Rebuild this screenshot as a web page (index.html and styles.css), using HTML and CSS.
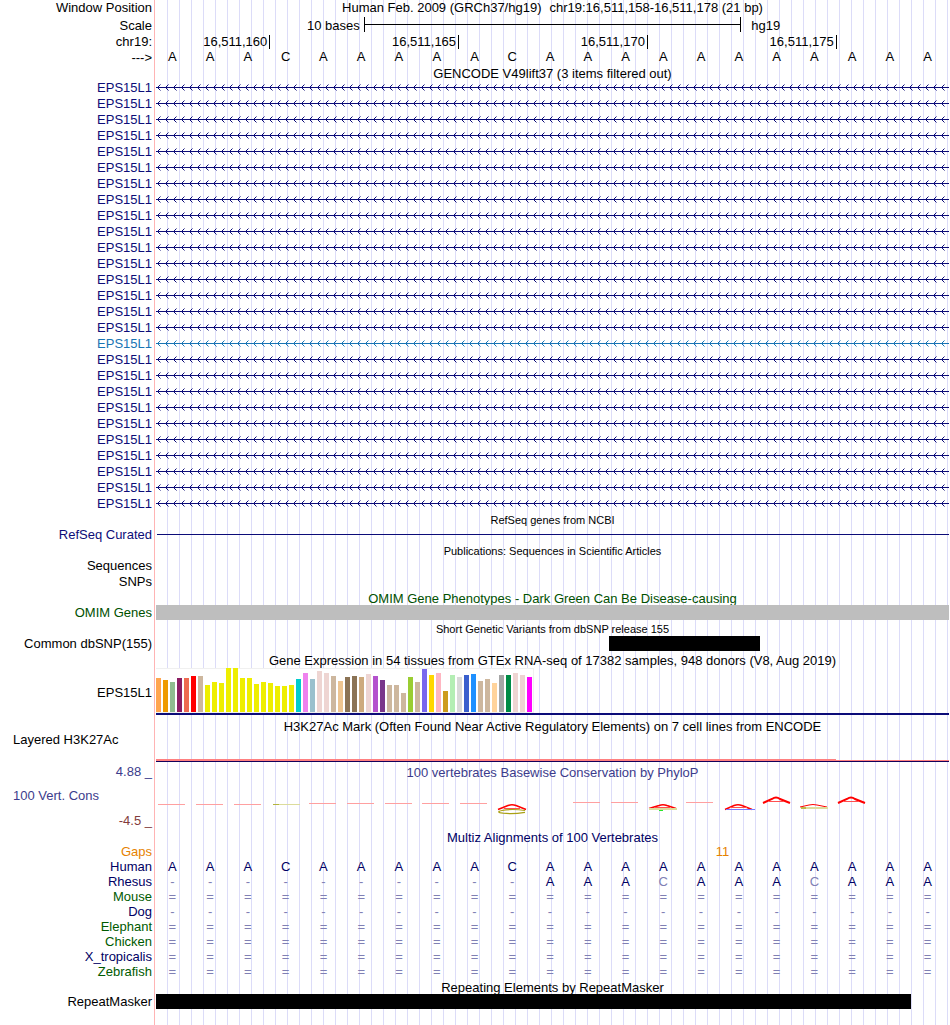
FILE: index.html
```html
<!DOCTYPE html>
<html lang="en">
  <head>
    <meta charset="UTF-8" />
    <meta name="viewport" content="width=device-width, initial-scale=1.0" />
    <title>Human chr19:16,511,158-16,511,178</title>
    <link rel="stylesheet" href="styles.css">
  </head>
  <body>
    <!-- chevron fills shared by all gene rows -->
    <svg class="defs" width="0" height="0" aria-hidden="true">
      <defs>
        <pattern id="chevrons-coding" width="8" height="16" patternUnits="userSpaceOnUse">
          <path class="coding-line" d="M0 7.5H8M4.5 4.5L1.5 7.5L4.5 10.5" />
        </pattern>
        <pattern id="chevrons-noncoding" width="8" height="16" patternUnits="userSpaceOnUse">
          <path class="noncoding-line" d="M0 7.5H8M4.5 4.5L1.5 7.5L4.5 10.5" />
        </pattern>
      </defs>
    </svg>

    <main class="browser">
      <div class="row">
        <div class="label">Window Position</div>
        <div class="data title position"><span>Human Feb. 2009 (GRCh37/hg19)</span><span>chr19:16,511,158-16,511,178 (21 bp)</span></div>
      </div>
      <div class="row scale-row">
        <div class="label">Scale</div>
        <div class="data scale">
          <span class="scale-length">10 bases</span>
          <span class="scale-bar"></span>
          <span class="scale-db">hg19</span>
        </div>
      </div>
      <div class="row">
        <div class="label">chr19:</div>
        <div class="data ruler">
          <span>16,511,160</span>
          <span>16,511,165</span>
          <span>16,511,170</span>
          <span>16,511,175</span>
        </div>
      </div>
      <div class="row short">
        <div class="label">---&gt;</div>
        <div class="data bases sequence" data-seq="AAACAAAAACAAAAAAAAAAA"></div>
      </div>

      <div class="row short"><div class="label"></div><h2 class="data title">GENCODE V49lift37 (3 items filtered out)</h2></div>
      <div id="genes"></div>

      <div class="row short"><div class="label"></div><h2 class="data title small">RefSeq genes from NCBI</h2></div>
      <div class="row coding">
        <div class="label">RefSeq Curated</div>
        <div class="data refseq"><span></span></div>
      </div>

      <div class="row short"><div class="label"></div><h2 class="data title small">Publications: Sequences in Scientific Articles</h2></div>
      <div class="row"><div class="label">Sequences</div><div class="data"></div></div>
      <div class="row"><div class="label">SNPs</div><div class="data"></div></div>

      <div class="row short omim"><div class="label"></div><h2 class="data title">OMIM Gene Phenotypes - Dark Green Can Be Disease-causing</h2></div>
      <div class="row omim">
        <div class="label">OMIM Genes</div>
        <div class="data"><div class="block omim-block"></div></div>
      </div>

      <div class="row short"><div class="label"></div><h2 class="data title small">Short Genetic Variants from dbSNP release 155</h2></div>
      <div class="row">
        <div class="label">Common dbSNP(155)</div>
        <div class="data dbsnp"><div class="block"></div></div>
      </div>

      <div class="row short"><div class="label"></div><h2 class="data title">Gene Expression in 54 tissues from GTEx RNA-seq of 17382 samples, 948 donors (V8, Aug 2019)</h2></div>
      <div class="row gtex">
        <div class="label">EPS15L1</div>
        <div class="data gtex-data">
          <div class="gtex-chart" id="gtex-chart"></div>
        </div>
      </div>

      <div class="row short"><div class="label"></div><h2 class="data title">H3K27Ac Mark (Often Found Near Active Regulatory Elements) on 7 cell lines from ENCODE</h2></div>
      <div class="row h3k27ac">
        <div class="label left">Layered H3K27Ac</div>
        <div class="data signal"><span class="signal-high"></span><span class="signal-low"></span></div>
      </div>

      <div class="row short phylop">
        <div class="label">4.88 _</div>
        <h2 class="data title">100 vertebrates Basewise Conservation by PhyloP</h2>
      </div>
      <div class="row phylop conservation">
        <div class="label limits">
          <span class="left">100 Vert. Cons</span>
          <span class="minimum">-4.5 _</span>
        </div>
        <div class="data">
          <svg class="logo" viewBox="0 0 793 50" preserveAspectRatio="none" aria-hidden="true">
            <g class="faint">
              <path d="M2 25.5h27M40 25.5h27M78 25.5h27" />
              <path d="M153 24.5h27M191 24.5h27M229 24.5h27M266 24.5h27M304 24.5h27" />
              <path d="M417 23.5h27M455 23.5h27M530 23.5h27" />
            </g>
            <path class="olive-faint" d="M117 25.5h27" />
            <path class="olive-dark" d="M117 25.5h6" />

            <path class="peak" d="M342 30.5L352 26.5Q356 25 360 26.5L370 30.5" />
            <path class="bar" d="M348 29.5h16" />
            <path class="olive" d="M369 31.5Q356 29.5 346 31.5Q339 33 347 34.2Q357 35.3 369 33.4" />

            <path class="peak" d="M493 29.5L503 26.5Q507 25 511 26.5L520 29.5" />
            <path class="bar" d="M499 28.5h15" />
            <path class="olive-faint thick" d="M493 30h28" />
            <path class="green" d="M503 31.5h4" />

            <path class="peak" d="M569 30.5L578 26.5Q582 25 586 26.5L596 30.5" />
            <path class="bar" d="M574 28.5h17" />
            <path class="blue" d="M570 30.5h29" />

            <path class="peak tall" d="M607 24L616 20Q620 17 624 20L634 24" />
            <path class="bar" d="M613 22.5h15" />

            <path class="peak low" d="M644 28L653 26Q657 25 661 26L671 28" />
            <path class="olive-faint thick" d="M645 29h27" />
            <path class="olive" d="M645 29h5" />

            <path class="peak tall" d="M682 24L691 20Q695 17 699 20L709 24" />
            <path class="bar" d="M688 22.5h15" />
          </svg>
        </div>
      </div>

      <div class="row short multiz"><div class="label"></div><h2 class="data title">Multiz Alignments of 100 Vertebrates</h2></div>
      <div class="row short gaps">
        <div class="label">Gaps</div>
        <div class="data gap-counts"><span>11</span></div>
      </div>
      <div id="alignments"></div>

      <div class="row short"><div class="label"></div><h2 class="data title">Repeating Elements by RepeatMasker</h2></div>
      <div class="row">
        <div class="label">RepeatMasker</div>
        <div class="data repeats"><div class="block"></div></div>
      </div>
    </main>

    <script src="tracks.js"></script>
  </body>
</html>
```

FILE: styles.css
```css
* {
  box-sizing: border-box;
}
body {
  margin: 0;
  background: #fff;
  color: #000;
  font-family: "Liberation Sans", Arial, Helvetica, sans-serif;
  font-size: 13px;
}
.defs {
  display: block;
}
.browser {
  min-height: 100vh;
  padding-right: 1px;
  /* red edge of the label column, then a guideline every 12px */
  background:
    linear-gradient(#ffb4b4, #ffb4b4) 154px 0 / 1px 100% no-repeat,
    linear-gradient(#fff, #fff) 0 0 / 156px 100% no-repeat,
    repeating-linear-gradient(to right, transparent 0 11px, #dcdcf8 11px 12px) 156px 0;
}

/* rows */
.row {
  display: grid;
  grid-template-columns: 152px minmax(0, 1fr);
  column-gap: 4px;
  height: 16px;
  line-height: 16px;
  white-space: nowrap;
}
.row.short {
  height: 15px;
  line-height: 15px;
}
.row.scale-row {
  height: 18px;
  line-height: 19px;
}
.label {
  text-align: right;
}
.left {
  padding-left: 13px;
  text-align: left;
}
.title {
  margin: 0;
  font-size: 13px;
  font-weight: normal;
  text-align: center;
}
h2.title {
  line-height: 17px;
}
.title.small {
  font-size: 11px;
}
.position {
  display: flex;
  justify-content: center;
  gap: 8px;
}

/* scale and ruler */
.scale {
  display: grid;
  grid-template-columns: 11fr 20fr 11fr;
}
.scale-length {
  padding-right: 4px;
  text-align: right;
}
.scale-bar {
  height: 15px;
  margin-top: 1px;
  border: solid #000;
  border-width: 0 1px;
  background: linear-gradient(#000, #000) 0 7px / 100% 1px no-repeat;
}
.scale-db {
  padding-left: 10px;
}
.ruler {
  display: grid;
  grid-template-columns: 3fr 5fr 5fr 5fr 3fr;
}
.ruler span {
  display: flex;
  justify-content: flex-end;
  align-items: center;
  height: 14px;
  margin: 1px -1px 0 0;
  padding-right: 2px;
  border-right: 1px solid #000;
}

/* one column per base */
.bases {
  display: grid;
  grid-template-columns: repeat(21, minmax(0, 1fr));
}
.bases span {
  padding-right: 5px;
  text-align: center;
}
.sequence {
  line-height: 13px;
}

/* genes */
.coding {
  color: #0c0c78;
}
.noncoding {
  color: #1874b4;
}
.coding-line,
.noncoding-line {
  fill: none;
  stroke: #0c0c78;
}
.noncoding-line {
  stroke: #1874b4;
}
.introns {
  display: block;
  width: 100%;
  height: 16px;
}
.refseq {
  padding: 7px 0 0 1px;
}
.refseq span {
  display: block;
  height: 1px;
  background: #0c0c78;
}

/* solid items */
.block {
  height: 15px;
  background: #000;
}
.omim {
  color: #005000;
}
.omim-block {
  background: #bebebe;
}
.dbsnp {
  display: grid;
  grid-template-columns: 12fr 4fr 5fr;
}
.dbsnp .block {
  grid-column: 2;
}
.repeats {
  display: grid;
  grid-template-columns: 20fr 1fr;
}

/* expression chart */
.row.gtex {
  height: 51px;
  line-height: 51px;
}
.gtex-data {
  height: 48px;
  padding-top: 1px;
  border-bottom: 2px solid #0c0c78;
}
.gtex-chart {
  display: flex;
  align-items: flex-end;
  gap: 2px;
  width: 378px;
  height: 45px;
  border: solid #f0f0f0;
  border-width: 1px 1px 1px 0;
  background: #fff;
}
.gtex-chart span {
  flex: none;
  width: 5px;
}

/* H3K27Ac signal */
.row.h3k27ac {
  height: 31px;
  line-height: 14px;
}
.signal {
  display: grid;
  grid-template-columns: 18fr 3fr;
  align-items: end;
  padding-bottom: 2px;
}
.signal span {
  border-bottom: 1px solid #14005a;
  background: #ff8080;
}
.signal-high {
  height: 3px;
}
.signal-low {
  height: 2px;
}

/* conservation */
.phylop {
  color: #3c3c8c;
}
.row.conservation {
  height: 50px;
  line-height: 16px;
}
.limits {
  display: flex;
  flex-direction: column;
  justify-content: space-between;
  padding-top: 9px;
}
.minimum {
  color: #823c3c;
}
.logo {
  display: block;
  width: 100%;
  height: 50px;
  fill: none;
}
.faint {
  stroke: #ffa0a0;
}
.peak {
  stroke: #f00;
  stroke-width: 1.5;
}
.peak.tall {
  stroke-width: 2;
}
.peak.low {
  stroke-width: 1;
}
.bar {
  stroke: #ff5050;
}
.olive {
  stroke: #aaa014;
  stroke-width: 1.2;
}
.olive-faint {
  stroke: #dcdc9c;
}
.olive-faint.thick {
  stroke-width: 2;
}
.olive-dark {
  stroke: #b4b43c;
}
.green {
  stroke: #28e628;
}
.blue {
  stroke: #7878ff;
}

/* alignments */
.multiz,
.direct {
  color: #000064;
}
.inferred {
  color: #005a00;
}
.gaps {
  color: #e68200;
}
.gap-counts {
  display: grid;
  grid-template-columns: 14fr 2fr 5fr;
  text-align: center;
}
.gap-counts span {
  grid-column: 2;
}
.alignment .bases {
  color: #000064;
}
.bases .mismatch {
  color: #8080b4;
}
```

FILE: tracks.js
```js
const geneCount = 27;
const noncodingGene = 16;

const species = [
  ["Human", "direct", "AAACAAAAACAAAAAAAAAAA"],
  ["Rhesus", "direct", "----------AAAcAAAcAAA"],
  ["Mouse", "inferred", "=".repeat(21)],
  ["Dog", "direct", "-".repeat(21)],
  ["Elephant", "inferred", "=".repeat(21)],
  ["Chicken", "inferred", "=".repeat(21)],
  ["X_tropicalis", "direct", "=".repeat(21)],
  ["Zebrafish", "inferred", "=".repeat(21)],
];

// [color, bar height] for each tissue
const tissues = [
  ["#ffa54f", 34], ["#ee9a00", 32], ["#8fbc8f", 30], ["#8b1c62", 34],
  ["#ee6a50", 34], ["#ff0000", 36], ["#cdb79e", 36], ["#eeee00", 27],
  ["#eeee00", 30], ["#eeee00", 29], ["#eeee00", 44], ["#eeee00", 44],
  ["#eeee00", 34], ["#eeee00", 34], ["#eeee00", 28], ["#eeee00", 30],
  ["#eeee00", 29], ["#eeee00", 26], ["#eeee00", 26], ["#eeee00", 27],
  ["#00cdcd", 33], ["#ee82ee", 39], ["#9ac0cd", 33], ["#eed5d2", 41],
  ["#eed5d2", 39], ["#cdb79e", 36], ["#eec591", 31], ["#8b7355", 35],
  ["#8b7355", 36], ["#cdaa7d", 35], ["#eed5d2", 38], ["#b452cd", 36],
  ["#7a378b", 32], ["#cdb79e", 27], ["#cdb79e", 27], ["#cdb79e", 19],
  ["#9acd32", 35], ["#cdb79e", 30], ["#7a67ee", 43], ["#ffd700", 37],
  ["#ffb6c1", 39], ["#cd9b1d", 21], ["#b4eeb4", 37], ["#d9d9d9", 35],
  ["#3a5fcd", 37], ["#1e90ff", 38], ["#cdb79e", 31], ["#cdb79e", 33],
  ["#ffd39b", 29], ["#a6a6a6", 37], ["#008b45", 37], ["#eed5d2", 39],
  ["#eed5d2", 37], ["#ff00ff", 35],
];

// lower case marks a base that differs from human
function fillBases(el, seq) {
  for (const base of seq) {
    const span = document.createElement("span");
    span.textContent = base.toUpperCase();
    if (base !== base.toUpperCase() || base === "-" || base === "=") {
      span.className = "mismatch";
    }
    el.appendChild(span);
  }
}

const genes = document.getElementById("genes");
for (let i = 0; i < geneCount; i++) {
  const kind = i === noncodingGene ? "noncoding" : "coding";
  genes.insertAdjacentHTML(
    "beforeend",
    `<div class="row ${kind}">
      <div class="label">EPS15L1</div>
      <div class="data"><svg class="introns"><rect width="100%" height="16" fill="url(#chevrons-${kind})" /></svg></div>
    </div>`
  );
}

const chart = document.getElementById("gtex-chart");
tissues.forEach(([color, height]) => {
  const bar = document.createElement("span");
  bar.style.background = color;
  bar.style.height = height + "px";
  chart.appendChild(bar);
});

document.querySelectorAll("[data-seq]").forEach((el) => {
  fillBases(el, el.dataset.seq);
});

const alignments = document.getElementById("alignments");
species.forEach(([name, kind, seq]) => {
  const row = document.createElement("div");
  row.className = "row short alignment " + kind;
  row.innerHTML = `<div class="label">${name}</div><div class="data bases"></div>`;
  fillBases(row.lastChild, seq);
  alignments.appendChild(row);
});
```
